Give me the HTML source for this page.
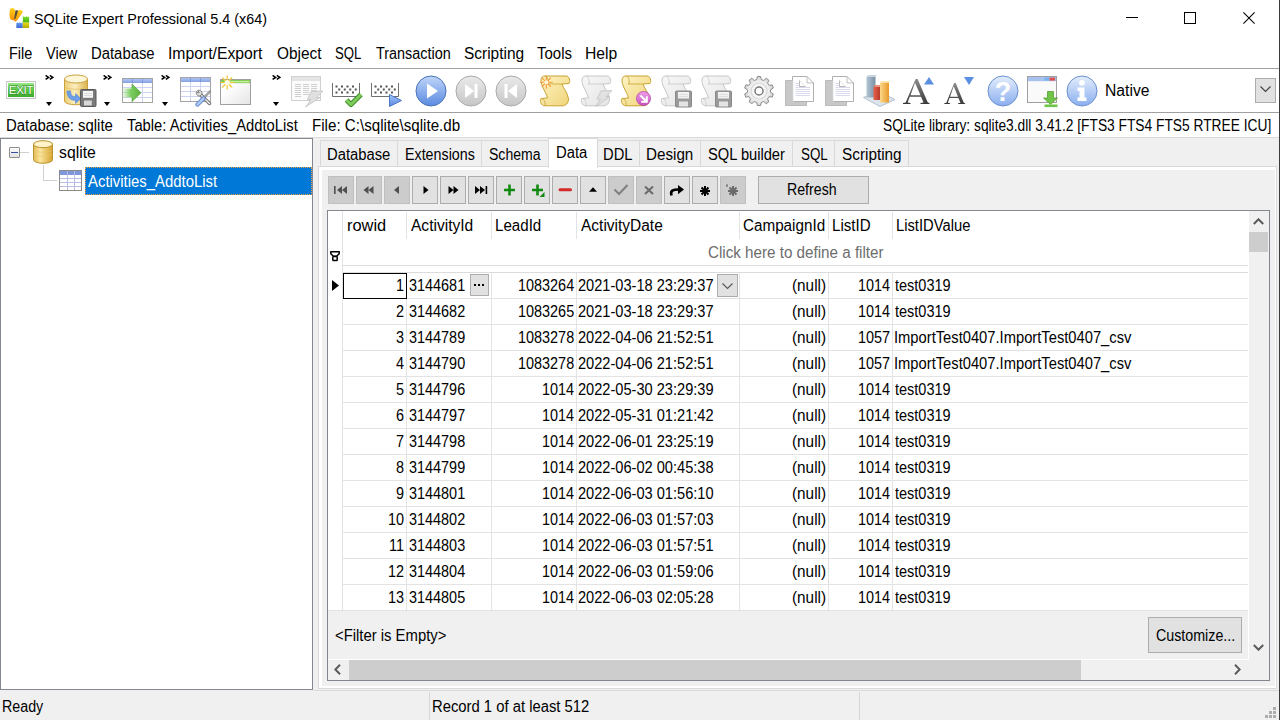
<!DOCTYPE html>
<html><head><meta charset="utf-8"><style>
html,body{margin:0;padding:0}
body{width:1280px;height:720px;position:relative;overflow:hidden;background:#f0f0f0;font-family:"Liberation Sans", sans-serif;font-size:15px;color:#000}
</style></head><body>
<div style="position:absolute;left:0px;top:0px;width:1280px;height:137px;background:#fff"></div>
<div style="position:absolute;left:0px;top:68px;width:1279px;height:1px;background:#a0a0a0"></div>
<div style="position:absolute;left:0px;top:112px;width:1279px;height:1px;background:#a0a0a0"></div>
<div style="position:absolute;left:0px;top:137px;width:1279px;height:1px;background:#dadada"></div>
<svg style="position:absolute;left:6px;top:5px" width="26" height="26" viewBox="0 0 26 26">
<defs><linearGradient id="tb1" x1="0" y1="0" x2="0" y2="1"><stop offset="0" stop-color="#ffd21a"/><stop offset="1" stop-color="#f39000"/></linearGradient>
<linearGradient id="tb2" x1="0" y1="0" x2="0" y2="1"><stop offset="0" stop-color="#7fe02a"/><stop offset="1" stop-color="#48b010"/></linearGradient>
<linearGradient id="tb3" x1="0" y1="0" x2="0" y2="1"><stop offset="0" stop-color="#eee020"/><stop offset="1" stop-color="#b8a800"/></linearGradient>
<linearGradient id="tb4" x1="0" y1="0" x2="0" y2="1"><stop offset="0" stop-color="#6a9cf0"/><stop offset="1" stop-color="#3a6ad8"/></linearGradient></defs>
<path d="M4.5,3.5 C6.5,2.2 8.8,3 9,5.5 L8.6,14.5 C7.8,15.8 5.8,15.5 4.6,14.3 C3,12 3.2,6 4.5,3.5 Z" fill="url(#tb1)"/>
<path d="M13,5.2 C15,4.6 17.2,5.8 16.6,7.6 L10.5,16 C9.5,16.8 8,16.5 8,15.2 L11,7.2 C11.5,6 12,5.5 13,5.2 Z" fill="url(#tb1)"/>
<path d="M9.5,5.2 L12.2,5.6 L9.6,13.6 L8,14.2 Z" fill="#5a4a30"/>
<path d="M10.3,18.2 L11.5,17.2 L12.3,18.2 L13.7,17.2 L15,18.2 L16.8,17.2 V23 H10.3 Z" fill="url(#tb4)"/>
<path d="M16.8,11.8 L17.8,11.2 L18.8,12.2 L20.8,11.2 L21.8,12.2 L23.1,11.2 V17.7 H16.8 Z" fill="url(#tb2)"/>
<path d="M16.8,17.7 L18,17 L19.2,17.9 L20.6,17 L22,17.9 L23.1,17.2 V23 H16.8 Z" fill="url(#tb3)"/>
</svg>
<div style="position:absolute;left:33.87px;top:11.24px;line-height:15px;font-size:15px;color:#000;white-space:nowrap;transform-origin:0 0;transform:scaleX(0.9569)">SQLite Expert Professional 5.4 (x64)</div>
<div style="position:absolute;left:1126px;top:17px;width:12px;height:1px;background:#000"></div>
<div style="position:absolute;left:1184px;top:12px;width:12px;height:12px;border:1px solid #000;box-sizing:border-box"></div>
<svg style="position:absolute;left:1243px;top:12px" width="12" height="12" viewBox="0 0 12 12"><path d="M0.4,0.4 L11.6,11.6 M11.6,0.4 L0.4,11.6" stroke="#000" stroke-width="1.05"/></svg>
<div style="position:absolute;left:1279px;top:0px;width:1px;height:720px;background:#3c3c3c"></div>
<div style="position:absolute;left:8.63px;top:46.46px;line-height:16px;font-size:16px;color:#000;white-space:nowrap;transform-origin:0 0;transform:scaleX(0.9019)">File</div>
<div style="position:absolute;left:46.25px;top:46.46px;line-height:16px;font-size:16px;color:#000;white-space:nowrap;transform-origin:0 0;transform:scaleX(0.9075)">View</div>
<div style="position:absolute;left:91.29px;top:46.46px;line-height:16px;font-size:16px;color:#000;white-space:nowrap;transform-origin:0 0;transform:scaleX(0.9287)">Database</div>
<div style="position:absolute;left:168.12px;top:46.46px;line-height:16px;font-size:16px;color:#000;white-space:nowrap;transform-origin:0 0;transform:scaleX(0.9832)">Import/Export</div>
<div style="position:absolute;left:276.53px;top:46.46px;line-height:16px;font-size:16px;color:#000;white-space:nowrap;transform-origin:0 0;transform:scaleX(0.9605)">Object</div>
<div style="position:absolute;left:335.13px;top:46.46px;line-height:16px;font-size:16px;color:#000;white-space:nowrap;transform-origin:0 0;transform:scaleX(0.8210)">SQL</div>
<div style="position:absolute;left:375.53px;top:46.46px;line-height:16px;font-size:16px;color:#000;white-space:nowrap;transform-origin:0 0;transform:scaleX(0.9008)">Transaction</div>
<div style="position:absolute;left:463.62px;top:46.46px;line-height:16px;font-size:16px;color:#000;white-space:nowrap;transform-origin:0 0;transform:scaleX(0.9661)">Scripting</div>
<div style="position:absolute;left:537.32px;top:46.46px;line-height:16px;font-size:16px;color:#000;white-space:nowrap;transform-origin:0 0;transform:scaleX(0.9357)">Tools</div>
<div style="position:absolute;left:585.33px;top:46.46px;line-height:16px;font-size:16px;color:#000;white-space:nowrap;transform-origin:0 0;transform:scaleX(0.9804)">Help</div>
<svg style="position:absolute;left:6px;top:81px" width="30" height="18" viewBox="0 0 30 18"><defs><linearGradient id="ex" x1="0" y1="0" x2="0" y2="1"><stop offset="0" stop-color="#9be88a"/><stop offset="0.45" stop-color="#5ccc48"/><stop offset="1" stop-color="#3eaa30"/></linearGradient></defs>
<rect x="0.5" y="0.5" width="29" height="17" fill="#fafafa" stroke="#c8c8c8"/>
<rect x="2" y="2" width="26" height="14" fill="url(#ex)"/>
<text x="15" y="13.1" font-family="Liberation Sans" font-size="11.6" fill="#fff" stroke="#2f8a22" stroke-width="0.9" paint-order="stroke" text-anchor="middle" letter-spacing="-0.35">EXIT</text></svg>
<svg style="position:absolute;left:45px;top:75px" width="9" height="5" viewBox="0 0 9 5"><path d="M0.6,0.4 L3.6,2.4 L0.6,4.4 M4.8,0.4 L7.8,2.4 L4.8,4.4" fill="none" stroke="#000" stroke-width="1.5"/></svg>
<svg style="position:absolute;left:103px;top:75px" width="9" height="5" viewBox="0 0 9 5"><path d="M0.6,0.4 L3.6,2.4 L0.6,4.4 M4.8,0.4 L7.8,2.4 L4.8,4.4" fill="none" stroke="#000" stroke-width="1.5"/></svg>
<svg style="position:absolute;left:161px;top:75px" width="9" height="5" viewBox="0 0 9 5"><path d="M0.6,0.4 L3.6,2.4 L0.6,4.4 M4.8,0.4 L7.8,2.4 L4.8,4.4" fill="none" stroke="#000" stroke-width="1.5"/></svg>
<svg style="position:absolute;left:272px;top:75px" width="9" height="5" viewBox="0 0 9 5"><path d="M0.6,0.4 L3.6,2.4 L0.6,4.4 M4.8,0.4 L7.8,2.4 L4.8,4.4" fill="none" stroke="#000" stroke-width="1.5"/></svg>
<svg style="position:absolute;left:46px;top:102px" width="7" height="5" viewBox="0 0 7 5"><path d="M0,0 H6 L3,4 Z" fill="#000"/></svg>
<svg style="position:absolute;left:104px;top:102px" width="7" height="5" viewBox="0 0 7 5"><path d="M0,0 H6 L3,4 Z" fill="#000"/></svg>
<svg style="position:absolute;left:162px;top:102px" width="7" height="5" viewBox="0 0 7 5"><path d="M0,0 H6 L3,4 Z" fill="#000"/></svg>
<svg style="position:absolute;left:273px;top:102px" width="7" height="5" viewBox="0 0 7 5"><path d="M0,0 H6 L3,4 Z" fill="#000"/></svg>
<svg style="position:absolute;left:63px;top:74px" width="34" height="34" viewBox="0 0 34 34"><defs><linearGradient id="cy" x1="0" y1="0" x2="1" y2="0"><stop offset="0" stop-color="#ebcd72"/><stop offset="0.45" stop-color="#fcefc0"/><stop offset="1" stop-color="#dcb04a"/></linearGradient></defs>
<path d="M1.5,5 V27 C1.5,32 24.5,32 24.5,27 V5 Z" fill="url(#cy)" stroke="#caa23e"/>
<ellipse cx="13" cy="5" rx="11.5" ry="4" fill="#fdf6d8" stroke="#caa23e"/>
<path d="M2,13 C5,16 21,16 24,13" fill="none" stroke="#e6c468" stroke-width="0.8"/>
<path d="M4,17 L7.6,17 C7.6,21 9,22.6 12.5,22.6 L12.5,19.6 L17.8,24.6 L12.5,29.6 L12.5,26.4 C7,26.4 4,23 4,17 Z" fill="#6f9ee8" stroke="#4f7fcc" stroke-width="0.6"/>
<rect x="17.5" y="15.5" width="15.5" height="17" rx="1" fill="#7a7a7a" stroke="#5a5a5a"/>
<rect x="20" y="17" width="10" height="6.8" fill="#f6f6f6"/>
<path d="M21,19.5 H29 M21,21.5 H29" stroke="#d0d0d0" stroke-width="0.7"/>
<rect x="21" y="26.5" width="7.8" height="5" fill="#d8d8d8"/></svg>
<svg style="position:absolute;left:122px;top:78px" width="32" height="27" viewBox="0 0 32 27"><defs><linearGradient id="th86a0e2" x1="0" y1="0" x2="0" y2="1"><stop offset="0" stop-color="#b0c4f4"/><stop offset="1" stop-color="#86a0e2"/></linearGradient></defs>
<rect x="0.5" y="0.5" width="30" height="24" fill="#fff" stroke="#a4a4a4"/>
<rect x="1" y="1" width="29" height="4" fill="url(#th86a0e2)"/>
<path d="M10.5,5 V24 M20.5,5 V24 M1,9.5 H30 M1,14.5 H30 M1,19.5 H30" stroke="#cdd3f2" stroke-width="1"/>
<path d="M10.5,1 V5 M20.5,1 V5" stroke="#6c86cc" stroke-width="0.6"/><defs><linearGradient id="ga" x1="0" y1="0" x2="1" y2="0"><stop offset="0" stop-color="#9ad77f" stop-opacity="0.1"/><stop offset="0.45" stop-color="#7ccf60"/><stop offset="1" stop-color="#5cb040"/></linearGradient></defs>
<path d="M0,10.4 H10 V6.1 L19,14.8 L10,23.6 V19.3 H0 Z" fill="url(#ga)"/>
<path d="M10,10.4 V6.1 L19,14.8 L10,23.6 V19.3" fill="none" stroke="#4f9e36" stroke-width="0.7"/></svg>
<svg style="position:absolute;left:180px;top:77px" width="33" height="30" viewBox="0 0 33 30"><defs><linearGradient id="th86a0e2" x1="0" y1="0" x2="0" y2="1"><stop offset="0" stop-color="#b0c4f4"/><stop offset="1" stop-color="#86a0e2"/></linearGradient></defs>
<rect x="0.5" y="0.5" width="30" height="24" fill="#fff" stroke="#a4a4a4"/>
<rect x="1" y="1" width="29" height="4" fill="url(#th86a0e2)"/>
<path d="M10.5,5 V24 M20.5,5 V24 M1,9.5 H30 M1,14.5 H30 M1,19.5 H30" stroke="#cdd3f2" stroke-width="1"/>
<path d="M10.5,1 V5 M20.5,1 V5" stroke="#6c86cc" stroke-width="0.6"/>
<path d="M19.5,16.5 L29.5,26.5" stroke="#707070" stroke-width="3.4" stroke-linecap="round"/>
<path d="M19.5,16.5 L29.5,26.5" stroke="#e8e8e8" stroke-width="1.6" stroke-linecap="round"/>
<path d="M16.5,14.5 C15.5,17 17.5,19.5 20,19 L22,17 C22.5,14.5 20,12.5 17.5,13.5 L19.2,15.2 L18.2,16.2 Z" fill="#e0e0e0" stroke="#707070" stroke-width="0.9"/>
<path d="M23,21.5 L30,14.5" stroke="#707070" stroke-width="2.2" stroke-linecap="round"/>
<path d="M23,21.5 L30,14.5" stroke="#e8e8e8" stroke-width="0.9" stroke-linecap="round"/>
<path d="M17.5,27.5 L23.5,21.5" stroke="#5a7cc0" stroke-width="4.2" stroke-linecap="round"/>
<path d="M17.5,27.5 L23.5,21.5" stroke="#a8c8f8" stroke-width="2.6" stroke-linecap="round"/></svg>
<svg style="position:absolute;left:219px;top:74px" width="33" height="32" viewBox="0 0 33 32"><defs><linearGradient id="nw" x1="0" y1="0" x2="1" y2="1"><stop offset="0.3" stop-color="#fff"/><stop offset="1" stop-color="#e4e4e4"/></linearGradient></defs>
<rect x="1.5" y="5.5" width="30" height="25" fill="url(#nw)" stroke="#a0a0a0"/>
<rect x="2" y="6" width="29" height="3.2" fill="#86cc58"/>
<rect x="9" y="7" width="21" height="1.3" fill="#c8f0a0"/>
<g stroke="#f5c838" stroke-width="1.2"><path d="M8.2,1.5 V15.5 M1.2,8.5 H15.2 M3.2,3.5 L13.2,13.5 M13.2,3.5 L3.2,13.5"/></g>
<circle cx="8.2" cy="8.5" r="2.6" fill="#fffbe8"/></svg>
<svg style="position:absolute;left:290px;top:75px" width="34" height="33" viewBox="0 0 34 33"><rect x="1.5" y="1.5" width="29" height="24" fill="#fbfbfb" stroke="#d0d0d0"/>
<rect x="2" y="2" width="28" height="4" fill="#e4e4e4"/>
<g stroke="#c4c4c4" stroke-width="0.8"><path d="M5,9.5 H11 M13,9.5 H19 M21,9.5 H27 M5,11.5 H11 M13,11.5 H19 M21,11.5 H27 M5,13.5 H11 M13,13.5 H19 M21,13.5 H27 M5,15.5 H11 M13,15.5 H19 M21,15.5 H27 M5,17.5 H11 M13,17.5 H19 M5,19.5 H11 M13,19.5 H19 M5,21.5 H11"/></g>
<path d="M21,16.5 L33,16 L26.5,22.5 L30,22.5 L15.5,32 L21,24.5 L17.5,24.5 Z" fill="#e0e0e0" stroke="#c2c2c2" stroke-width="0.8"/></svg>
<svg style="position:absolute;left:332px;top:75px" width="32" height="33" viewBox="0 0 32 33"><path d="M0.5,8 V21.5 H27.5 V8" fill="none" stroke="#707070" stroke-width="1"/><rect x="3.50" y="10.5" width="2" height="2" fill="#555"/><rect x="9.00" y="10.5" width="2" height="2" fill="#555"/><rect x="14.50" y="10.5" width="2" height="2" fill="#555"/><rect x="20.00" y="10.5" width="2" height="2" fill="#555"/><rect x="6.25" y="13.5" width="2" height="2" fill="#555"/><rect x="11.75" y="13.5" width="2" height="2" fill="#555"/><rect x="17.25" y="13.5" width="2" height="2" fill="#555"/><rect x="22.75" y="13.5" width="2" height="2" fill="#555"/><rect x="3.50" y="16.5" width="2" height="2" fill="#555"/><rect x="9.00" y="16.5" width="2" height="2" fill="#555"/><rect x="14.50" y="16.5" width="2" height="2" fill="#555"/><rect x="20.00" y="16.5" width="2" height="2" fill="#555"/><path d="M14.5,25 L19,29.5 L29,19.5" fill="none" stroke="#3f8f2a" stroke-width="5" stroke-linejoin="round"/>
<path d="M14.5,25 L19,29.5 L29,19.5" fill="none" stroke="#80cc5c" stroke-width="3" stroke-linejoin="round"/></svg>
<svg style="position:absolute;left:371px;top:75px" width="32" height="33" viewBox="0 0 32 33"><path d="M0.5,8 V21.5 H27.5 V8" fill="none" stroke="#707070" stroke-width="1"/><rect x="3.50" y="10.5" width="2" height="2" fill="#555"/><rect x="9.00" y="10.5" width="2" height="2" fill="#555"/><rect x="14.50" y="10.5" width="2" height="2" fill="#555"/><rect x="20.00" y="10.5" width="2" height="2" fill="#555"/><rect x="6.25" y="13.5" width="2" height="2" fill="#555"/><rect x="11.75" y="13.5" width="2" height="2" fill="#555"/><rect x="17.25" y="13.5" width="2" height="2" fill="#555"/><rect x="22.75" y="13.5" width="2" height="2" fill="#555"/><rect x="3.50" y="16.5" width="2" height="2" fill="#555"/><rect x="9.00" y="16.5" width="2" height="2" fill="#555"/><rect x="14.50" y="16.5" width="2" height="2" fill="#555"/><rect x="20.00" y="16.5" width="2" height="2" fill="#555"/><defs><linearGradient id="pl" x1="0" y1="0" x2="0" y2="1"><stop offset="0" stop-color="#a4c4f8"/><stop offset="1" stop-color="#5a88e0"/></linearGradient></defs><path d="M18.5,19.5 L30.5,25.5 L18.5,31.5 Z" fill="url(#pl)" stroke="#4a78c8" stroke-linejoin="round"/></svg>
<svg style="position:absolute;left:415px;top:75px" width="32" height="32" viewBox="0 0 32 32"><defs><linearGradient id="cb1" x1="0" y1="0" x2="0" y2="1"><stop offset="0" stop-color="#c0d6fa"/><stop offset="1" stop-color="#5a8ae0"/></linearGradient></defs>
<circle cx="16" cy="16" r="15" fill="url(#cb1)" stroke="#4a72b8" stroke-width="1"/><path d="M12,8.5 L23,16 L12,23.5 Z" fill="#fff"/></svg>
<svg style="position:absolute;left:455px;top:75px" width="32" height="32" viewBox="0 0 32 32"><defs><linearGradient id="cb2" x1="0" y1="0" x2="0" y2="1"><stop offset="0" stop-color="#eaeaea"/><stop offset="1" stop-color="#c6c6c6"/></linearGradient></defs>
<circle cx="16" cy="16" r="15" fill="url(#cb2)" stroke="#a8a8a8" stroke-width="1"/><path d="M10,9 L19,16 L10,23 Z M19.5,9 H22.5 V23 H19.5 Z" fill="#fff"/></svg>
<svg style="position:absolute;left:495px;top:75px" width="32" height="32" viewBox="0 0 32 32"><defs><linearGradient id="cb3" x1="0" y1="0" x2="0" y2="1"><stop offset="0" stop-color="#eaeaea"/><stop offset="1" stop-color="#c6c6c6"/></linearGradient></defs>
<circle cx="16" cy="16" r="15" fill="url(#cb3)" stroke="#a8a8a8" stroke-width="1"/><path d="M22,9 L13,16 L22,23 Z M9.5,9 H12.5 V23 H9.5 Z" fill="#fff"/></svg>
<svg style="position:absolute;left:539px;top:75px" width="32" height="32" viewBox="0 0 32 32"><defs><linearGradient id="sc1" x1="0" y1="0" x2="1" y2="1"><stop offset="0" stop-color="#fdf3c4"/><stop offset="1" stop-color="#f0d478"/></linearGradient></defs>
<path d="M6,1 H27 C30.5,1 31.5,6.5 30,8.5 L23,9 C24,13 29,18 29.5,24 C29.5,28 27,30.8 23,30.8 H6 C1.5,30.8 0.5,25 2,23.5 L8.5,23 C7,17 2,11 2,5.5 C2,2.5 3.5,1 6,1 Z" fill="url(#sc1)" stroke="#c8a230" stroke-width="1"/>
<path d="M6,1 C9,1 10.5,8.5 8,9 H23" fill="none" stroke="#c8a230" stroke-width="0.8"/>
<path d="M2,23.5 C4.5,23.5 6.5,26 6,30.8" fill="none" stroke="#c8a230" stroke-width="0.8"/><g stroke="#f29a3a" stroke-width="1.1"><path d="M7.3,0.8 V13.8 M0.8,7.3 H13.8 M2.7,2.7 L11.9,11.9 M11.9,2.7 L2.7,11.9"/></g><circle cx="7.3" cy="7.3" r="2" fill="#fff6dc"/></svg>
<svg style="position:absolute;left:580px;top:75px" width="32" height="32" viewBox="0 0 32 32"><defs><linearGradient id="sc2" x1="0" y1="0" x2="1" y2="1"><stop offset="0" stop-color="#f8f8f8"/><stop offset="1" stop-color="#e4e4e4"/></linearGradient></defs>
<path d="M6,1 H27 C30.5,1 31.5,6.5 30,8.5 L23,9 C24,13 29,18 29.5,24 C29.5,28 27,30.8 23,30.8 H6 C1.5,30.8 0.5,25 2,23.5 L8.5,23 C7,17 2,11 2,5.5 C2,2.5 3.5,1 6,1 Z" fill="url(#sc2)" stroke="#c6c6c6" stroke-width="1"/>
<path d="M6,1 C9,1 10.5,8.5 8,9 H23" fill="none" stroke="#c6c6c6" stroke-width="0.8"/>
<path d="M2,23.5 C4.5,23.5 6.5,26 6,30.8" fill="none" stroke="#c6c6c6" stroke-width="0.8"/><path d="M21,16 L32,15.5 L26,21.5 L29.5,21.5 L16,31.5 L20.5,24 L17,24 Z" fill="#e2e2e2" stroke="#c0c0c0" stroke-width="0.8"/></svg>
<svg style="position:absolute;left:620px;top:75px" width="32" height="32" viewBox="0 0 32 32"><defs><linearGradient id="sc3" x1="0" y1="0" x2="1" y2="1"><stop offset="0" stop-color="#fdf3c4"/><stop offset="1" stop-color="#f0d478"/></linearGradient></defs>
<path d="M6,1 H27 C30.5,1 31.5,6.5 30,8.5 L23,9 C24,13 29,18 29.5,24 C29.5,28 27,30.8 23,30.8 H6 C1.5,30.8 0.5,25 2,23.5 L8.5,23 C7,17 2,11 2,5.5 C2,2.5 3.5,1 6,1 Z" fill="url(#sc3)" stroke="#c8a230" stroke-width="1"/>
<path d="M6,1 C9,1 10.5,8.5 8,9 H23" fill="none" stroke="#c8a230" stroke-width="0.8"/>
<path d="M2,23.5 C4.5,23.5 6.5,26 6,30.8" fill="none" stroke="#c8a230" stroke-width="0.8"/><defs><linearGradient id="pk" x1="0" y1="0" x2="0" y2="1"><stop offset="0" stop-color="#f0a0ec"/><stop offset="1" stop-color="#c850c0"/></linearGradient></defs><circle cx="23.5" cy="23.5" r="7" fill="url(#pk)" stroke="#b048a8" stroke-width="0.8"/><path d="M20.5,20.5 L26,26 M26.8,21.2 V26.8 H21.2" stroke="#fff" stroke-width="2" fill="none"/></svg>
<svg style="position:absolute;left:660px;top:75px" width="33" height="33" viewBox="0 0 33 33"><defs><linearGradient id="sc4" x1="0" y1="0" x2="1" y2="1"><stop offset="0" stop-color="#f8f8f8"/><stop offset="1" stop-color="#e4e4e4"/></linearGradient></defs>
<path d="M6,1 H27 C30.5,1 31.5,6.5 30,8.5 L23,9 C24,13 29,18 29.5,24 C29.5,28 27,30.8 23,30.8 H6 C1.5,30.8 0.5,25 2,23.5 L8.5,23 C7,17 2,11 2,5.5 C2,2.5 3.5,1 6,1 Z" fill="url(#sc4)" stroke="#c6c6c6" stroke-width="1"/>
<path d="M6,1 C9,1 10.5,8.5 8,9 H23" fill="none" stroke="#c6c6c6" stroke-width="0.8"/>
<path d="M2,23.5 C4.5,23.5 6.5,26 6,30.8" fill="none" stroke="#c6c6c6" stroke-width="0.8"/><rect x="15.5" y="16" width="16" height="16" rx="1" fill="#9a9a9a" stroke="#8a8a8a"/><rect x="18" y="17" width="11" height="6.5" fill="#f2f2f2"/><path d="M19,19.5 H28 M19,21.5 H28" stroke="#d0d0d0" stroke-width="0.6"/><rect x="19" y="26.5" width="9" height="5" fill="#e4e4e4"/></svg>
<svg style="position:absolute;left:700px;top:75px" width="33" height="33" viewBox="0 0 33 33"><defs><linearGradient id="sc5" x1="0" y1="0" x2="1" y2="1"><stop offset="0" stop-color="#f8f8f8"/><stop offset="1" stop-color="#e4e4e4"/></linearGradient></defs>
<path d="M6,1 H27 C30.5,1 31.5,6.5 30,8.5 L23,9 C24,13 29,18 29.5,24 C29.5,28 27,30.8 23,30.8 H6 C1.5,30.8 0.5,25 2,23.5 L8.5,23 C7,17 2,11 2,5.5 C2,2.5 3.5,1 6,1 Z" fill="url(#sc5)" stroke="#c6c6c6" stroke-width="1"/>
<path d="M6,1 C9,1 10.5,8.5 8,9 H23" fill="none" stroke="#c6c6c6" stroke-width="0.8"/>
<path d="M2,23.5 C4.5,23.5 6.5,26 6,30.8" fill="none" stroke="#c6c6c6" stroke-width="0.8"/><rect x="15.5" y="16" width="16" height="16" rx="1" fill="#9a9a9a" stroke="#8a8a8a"/><rect x="18" y="17" width="11" height="6.5" fill="#f2f2f2"/><path d="M19,19.5 H28 M19,21.5 H28" stroke="#d0d0d0" stroke-width="0.6"/><rect x="19" y="26.5" width="9" height="5" fill="#e4e4e4"/></svg>
<svg style="position:absolute;left:743px;top:75px" width="32" height="32" viewBox="0 0 32 32"><defs><radialGradient id="gr" cx="0.5" cy="0.5" r="0.5"><stop offset="0.2" stop-color="#fdfdfd"/><stop offset="0.7" stop-color="#ececec"/><stop offset="1" stop-color="#d4d4d4"/></radialGradient></defs>
<path d="M13.68,4.63 L14.35,1.49 L17.65,1.49 L18.32,4.63 L20.81,5.44 L23.19,3.30 L25.86,5.23 L24.56,8.17 L26.09,10.28 L29.29,9.95 L30.31,13.08 L27.53,14.69 L27.53,17.31 L30.31,18.92 L29.29,22.05 L26.09,21.72 L24.56,23.83 L25.86,26.77 L23.19,28.70 L20.81,26.56 L18.32,27.37 L17.65,30.51 L14.35,30.51 L13.68,27.37 L11.19,26.56 L8.81,28.70 L6.14,26.77 L7.44,23.83 L5.91,21.72 L2.71,22.05 L1.69,18.92 L4.47,17.31 L4.47,14.69 L1.69,13.08 L2.71,9.95 L5.91,10.28 L7.44,8.17 L6.14,5.23 L8.81,3.30 L11.19,5.44 Z" fill="url(#gr)" stroke="#8c8c8c" stroke-width="1" stroke-linejoin="round"/>
<circle cx="16" cy="16" r="8" fill="none" stroke="#d8d8d8" stroke-width="1.2"/>
<circle cx="16" cy="16" r="4" fill="#fff" stroke="#7a7a7a" stroke-width="1.5"/></svg>
<svg style="position:absolute;left:785px;top:75px" width="29" height="32" viewBox="0 0 29 32"><path d="M0.5,5.5 H15 L21.5,12 V30.5 H0.5 Z" fill="#c8c8c8" stroke="#bcbcbc"/>
<path d="M7.5,1.5 H22 L28.5,8 V26.5 H7.5 Z" fill="#fff" stroke="#b0b0b0"/>
<path d="M22,1.5 V8 H28.5" fill="none" stroke="#b0b0b0" stroke-width="0.8"/>
<rect x="7.5" y="5.5" width="1" height="21" fill="#e8e8e8"/>
<path d="M14.5,5.5 V11.5 H20.5" fill="none" stroke="#a8a8a8" stroke-width="0.8"/>
<path d="M14.5,5.5 L20.5,11.5" fill="none" stroke="#d0d0d0" stroke-width="0.6"/>
<g stroke="#c0c0e0" stroke-width="0.6"><path d="M10.5,8.5 H14 M10.5,10.5 H14 M10.5,12.5 H25 M10.5,14.5 H25 M10.5,16.5 H25 M10.5,18.5 H25 M10.5,20.5 H25"/></g></svg>
<svg style="position:absolute;left:825px;top:75px" width="29" height="32" viewBox="0 0 29 32"><path d="M0.5,5.5 H15 L21.5,12 V30.5 H0.5 Z" fill="#c8c8c8" stroke="#bcbcbc"/>
<path d="M7.5,1.5 H22 L28.5,8 V26.5 H7.5 Z" fill="#fff" stroke="#b0b0b0"/>
<path d="M22,1.5 V8 H28.5" fill="none" stroke="#b0b0b0" stroke-width="0.8"/>
<rect x="7.5" y="5.5" width="1" height="21" fill="#e8e8e8"/>
<path d="M14.5,5.5 V11.5 H20.5" fill="none" stroke="#a8a8a8" stroke-width="0.8"/>
<path d="M14.5,5.5 L20.5,11.5" fill="none" stroke="#d0d0d0" stroke-width="0.6"/>
<g stroke="#c0c0e0" stroke-width="0.6"><path d="M10.5,8.5 H14 M10.5,10.5 H14 M10.5,12.5 H25 M10.5,14.5 H25 M10.5,16.5 H25 M10.5,18.5 H25 M10.5,20.5 H25"/></g></svg>
<svg style="position:absolute;left:862px;top:74px" width="34" height="34" viewBox="0 0 34 34"><defs><linearGradient id="b1" x1="0" y1="0" x2="1" y2="0"><stop offset="0" stop-color="#b4c6d6"/><stop offset="1" stop-color="#7890a4"/></linearGradient>
<linearGradient id="b2" x1="0" y1="0" x2="1" y2="0"><stop offset="0" stop-color="#e8604c"/><stop offset="1" stop-color="#b83a2a"/></linearGradient>
<linearGradient id="b3" x1="0" y1="0" x2="1" y2="0"><stop offset="0" stop-color="#fcd88a"/><stop offset="1" stop-color="#e89a2a"/></linearGradient></defs>
<path d="M1.5,23.5 L18,32.5 L33,25.5 L16.5,17.5 Z" fill="#dce4ec" stroke="#b4c0cc" stroke-linejoin="round"/>
<rect x="4.5" y="2.5" width="9" height="21" fill="url(#b1)"/>
<path d="M4.5,2.5 L6,1 H15 L13.5,2.5 Z" fill="#c8d6e2"/>
<rect x="11.5" y="12.5" width="6.5" height="13.5" fill="url(#b2)"/>
<path d="M11.5,12.5 L13,11 H19.5 L18,12.5 Z" fill="#f08878"/>
<rect x="18" y="8.5" width="9" height="20" fill="url(#b3)"/>
<path d="M18,8.5 L19.5,7 H28.5 L27,8.5 Z" fill="#fde4a8"/></svg>
<svg style="position:absolute;left:900px;top:74px" width="36" height="32" viewBox="0 0 36 32"><defs><linearGradient id="ag" x1="0" y1="0" x2="0" y2="1"><stop offset="0" stop-color="#8c8c8c"/><stop offset="1" stop-color="#383838"/></linearGradient></defs>
<path transform="translate(3,5)" d="M0,25 H7.5 V24 L4.6,23.5 L6.8,17.8 H18 L20.6,23.5 L17.5,24 V25 H26.5 V24 L24.8,23.5 L14.6,0 H12.6 L2.7,23.5 L0,24 Z M7.5,16.2 H17.5 L12,3.8 Z" fill="url(#ag)" fill-rule="evenodd"/>
<path d="M24,10.5 L29,3 L34,10.5 Z" fill="#5b8fe0"/></svg>
<svg style="position:absolute;left:941px;top:74px" width="36" height="32" viewBox="0 0 36 32"><defs><linearGradient id="ag2" x1="0" y1="0" x2="0" y2="1"><stop offset="0" stop-color="#8c8c8c"/><stop offset="1" stop-color="#383838"/></linearGradient></defs>
<path transform="translate(3.2,9.1) scale(0.79,0.84)" d="M0,25 H7.5 V24 L4.6,23.5 L6.8,17.8 H18 L20.6,23.5 L17.5,24 V25 H26.5 V24 L24.8,23.5 L14.6,0 H12.6 L2.7,23.5 L0,24 Z M7.5,16.2 H17.5 L12,3.8 Z" fill="url(#ag2)" fill-rule="evenodd"/>
<path d="M23,3 H33 L28,11 Z" fill="#5b8fe0"/></svg>
<svg style="position:absolute;left:987px;top:75px" width="32" height="32" viewBox="0 0 32 32"><defs><linearGradient id="cb4" x1="0" y1="0" x2="0" y2="1"><stop offset="0" stop-color="#e4eefc"/><stop offset="1" stop-color="#8aaeee"/></linearGradient></defs>
<circle cx="16" cy="16" r="15" fill="url(#cb4)" stroke="#6c90d0" stroke-width="1"/><text x="16" y="26" font-family="Liberation Sans" font-weight="bold" font-size="27" fill="#fff" text-anchor="middle">?</text></svg>
<svg style="position:absolute;left:1026px;top:75px" width="34" height="33" viewBox="0 0 34 33"><rect x="1.5" y="1.5" width="29" height="26" fill="#fafafa" stroke="#a0a0a0"/>
<rect x="2" y="2" width="28" height="4.2" fill="#a8c2f0"/>
<rect x="18.5" y="2.6" width="4.5" height="3" fill="#78b4f0"/><rect x="23.5" y="2.6" width="5.5" height="3" fill="#e05050"/>
<path d="M21.5,16.5 H27.5 V23 H31.5 L24.5,29.5 L17.5,23 H21.5 Z" fill="#70c448" stroke="#4a9a28" stroke-width="0.7"/>
<rect x="18.5" y="29.5" width="13" height="2.6" fill="#70c448"/></svg>
<svg style="position:absolute;left:1066px;top:75px" width="32" height="32" viewBox="0 0 32 32"><defs><linearGradient id="cb5" x1="0" y1="0" x2="0" y2="1"><stop offset="0" stop-color="#e4eefc"/><stop offset="1" stop-color="#8aaeee"/></linearGradient></defs>
<circle cx="16" cy="16" r="15" fill="url(#cb5)" stroke="#6c90d0" stroke-width="1"/><circle cx="16" cy="7.8" r="2.9" fill="#fff"/><path d="M11.5,12.5 H18.5 V22.5 H20.5 V26 H11.5 V22.5 H13.5 V16 H11.5 Z" fill="#fff"/></svg>
<div style="position:absolute;left:1104.73px;top:83.46px;line-height:16px;font-size:16px;color:#000;white-space:nowrap;transform-origin:0 0;transform:scaleX(0.9803)">Native</div>
<div style="position:absolute;left:1255px;top:78px;width:21px;height:25px;background:#e1e1e1;border:1px solid #adadad;box-sizing:border-box"></div>
<svg style="position:absolute;left:1260px;top:86px" width="11" height="7" viewBox="0 0 11 7"><path d="M0.5,0.5 L5.5,5.5 L10.5,0.5" fill="none" stroke="#444" stroke-width="1.2"/></svg>
<div style="position:absolute;left:6.29px;top:118.46px;line-height:16px;font-size:16px;color:#000;white-space:nowrap;transform-origin:0 0;transform:scaleX(0.9314)">Database: sqlite</div>
<div style="position:absolute;left:127.22px;top:118.46px;line-height:16px;font-size:16px;color:#000;white-space:nowrap;transform-origin:0 0;transform:scaleX(0.9233)">Table: Activities_AddtoList</div>
<div style="position:absolute;left:311.77px;top:118.46px;line-height:16px;font-size:16px;color:#000;white-space:nowrap;transform-origin:0 0;transform:scaleX(0.9463)">File: C:\sqlite\sqlite.db</div>
<div style="position:absolute;left:882.90px;top:118.46px;line-height:16px;font-size:16px;color:#000;white-space:nowrap;transform-origin:0 0;transform:scaleX(0.8600)">SQLite library: sqlite3.dll 3.41.2 [FTS3 FTS4 FTS5 RTREE ICU]</div>
<div style="position:absolute;left:0px;top:138px;width:313px;height:552px;background:#fff;border:1px solid #828790;box-sizing:border-box"></div>
<div style="position:absolute;left:9px;top:147px;width:11px;height:11px;background:linear-gradient(#fdfdfd,#e0e0e0);border:1px solid #8f8f8f;box-sizing:border-box;border-radius:1px"></div>
<div style="position:absolute;left:11px;top:152px;width:7px;height:1px;background:#3a4ea0"></div>
<div style="position:absolute;left:20px;top:152px;width:9px;height:1px;background:#d0d0d0"></div>
<div style="position:absolute;left:43px;top:165px;width:1px;height:16px;background:#d0d0d0"></div>
<div style="position:absolute;left:43px;top:180px;width:14px;height:1px;background:#d0d0d0"></div>
<svg style="position:absolute;left:32px;top:140px" width="22" height="25" viewBox="0 0 22 25"><defs><linearGradient id="tcy" x1="0" y1="0" x2="1" y2="0"><stop offset="0" stop-color="#e2b94e"/><stop offset="0.35" stop-color="#fbe6a0"/><stop offset="1" stop-color="#d6a32c"/></linearGradient></defs>
<path d="M1.5,4 V19.5 C1.5,24.5 20.5,24.5 20.5,19.5 V4 Z" fill="url(#tcy)" stroke="#b8922c"/>
<ellipse cx="11" cy="4.2" rx="9.5" ry="3.5" fill="#fdf2c8" stroke="#b8922c"/>
<path d="M2,10 C4,13 18,13 20,10 M2,14 C4,17 18,17 20,14" fill="none" stroke="#e8c870" stroke-width="0.7"/></svg>
<div style="position:absolute;left:58.61px;top:145.46px;line-height:16px;font-size:16px;color:#000;white-space:nowrap;transform-origin:0 0;transform:scaleX(0.9847)">sqlite</div>
<svg style="position:absolute;left:59px;top:170px" width="23" height="21" viewBox="0 0 23 21"><rect x="0.5" y="0.5" width="22" height="20" fill="#fff" stroke="#8a8a8a"/>
<rect x="1" y="1" width="21" height="4" fill="#7f98dc"/>
<path d="M8.5,1 V20 M15.5,1 V20 M1,8.5 H22 M1,12.5 H22 M1,16.5 H22" stroke="#b8bee4" stroke-width="1"/></svg>
<div style="position:absolute;left:85px;top:167px;width:227px;height:28px;background:#0078d7"></div>
<div style="position:absolute;left:85px;top:167px;width:227px;height:28px;border:1px dotted #f0a040;box-sizing:border-box"></div>
<div style="position:absolute;left:87.75px;top:174.46px;line-height:16px;font-size:16px;color:#fff;white-space:nowrap;transform-origin:0 0;transform:scaleX(0.9312)">Activities_AddtoList</div>
<div style="position:absolute;left:320px;top:140px;width:78px;height:27px;background:#f0f0f0;border:1px solid #d9d9d9;box-sizing:border-box"></div>
<div style="position:absolute;left:326.80px;top:147.46px;line-height:16px;font-size:16px;color:#000;white-space:nowrap;transform-origin:0 0;transform:scaleX(0.9249)">Database</div>
<div style="position:absolute;left:397px;top:140px;width:85px;height:27px;background:#f0f0f0;border:1px solid #d9d9d9;box-sizing:border-box"></div>
<div style="position:absolute;left:404.54px;top:147.46px;line-height:16px;font-size:16px;color:#000;white-space:nowrap;transform-origin:0 0;transform:scaleX(0.8919)">Extensions</div>
<div style="position:absolute;left:481px;top:140px;width:68px;height:27px;background:#f0f0f0;border:1px solid #d9d9d9;box-sizing:border-box"></div>
<div style="position:absolute;left:488.99px;top:147.46px;line-height:16px;font-size:16px;color:#000;white-space:nowrap;transform-origin:0 0;transform:scaleX(0.8776)">Schema</div>
<div style="position:absolute;left:597px;top:140px;width:43px;height:27px;background:#f0f0f0;border:1px solid #d9d9d9;box-sizing:border-box"></div>
<div style="position:absolute;left:602.70px;top:147.46px;line-height:16px;font-size:16px;color:#000;white-space:nowrap;transform-origin:0 0;transform:scaleX(0.9202)">DDL</div>
<div style="position:absolute;left:639px;top:140px;width:62px;height:27px;background:#f0f0f0;border:1px solid #d9d9d9;box-sizing:border-box"></div>
<div style="position:absolute;left:646.47px;top:147.46px;line-height:16px;font-size:16px;color:#000;white-space:nowrap;transform-origin:0 0;transform:scaleX(0.9493)">Design</div>
<div style="position:absolute;left:700px;top:140px;width:93px;height:27px;background:#f0f0f0;border:1px solid #d9d9d9;box-sizing:border-box"></div>
<div style="position:absolute;left:707.66px;top:147.46px;line-height:16px;font-size:16px;color:#000;white-space:nowrap;transform-origin:0 0;transform:scaleX(0.9167)">SQL builder</div>
<div style="position:absolute;left:792px;top:140px;width:43px;height:27px;background:#f0f0f0;border:1px solid #d9d9d9;box-sizing:border-box"></div>
<div style="position:absolute;left:800.51px;top:147.46px;line-height:16px;font-size:16px;color:#000;white-space:nowrap;transform-origin:0 0;transform:scaleX(0.8372)">SQL</div>
<div style="position:absolute;left:834px;top:140px;width:75px;height:27px;background:#f0f0f0;border:1px solid #d9d9d9;box-sizing:border-box"></div>
<div style="position:absolute;left:841.73px;top:147.46px;line-height:16px;font-size:16px;color:#000;white-space:nowrap;transform-origin:0 0;transform:scaleX(0.9579)">Scripting</div>
<div style="position:absolute;left:318px;top:166px;width:959px;height:523px;background:#fff;border:1px solid #d9d9d9;box-sizing:border-box"></div>
<div style="position:absolute;left:322px;top:170px;width:953px;height:516px;background:#f0f0f0"></div>
<div style="position:absolute;left:548px;top:138px;width:50px;height:30px;background:#fff;border:1px solid #d9d9d9;border-bottom:none;box-sizing:border-box"></div>
<div style="position:absolute;left:556.00px;top:145.46px;line-height:16px;font-size:16px;color:#000;white-space:nowrap;transform-origin:0 0;transform:scaleX(0.9262)">Data</div>
<div style="position:absolute;left:328px;top:176px;width:26px;height:28px;background:#cccccc;border:1px solid #bfbfbf;box-sizing:border-box"></div>
<div style="position:absolute;left:356px;top:176px;width:26px;height:28px;background:#cccccc;border:1px solid #bfbfbf;box-sizing:border-box"></div>
<div style="position:absolute;left:384px;top:176px;width:26px;height:28px;background:#cccccc;border:1px solid #bfbfbf;box-sizing:border-box"></div>
<div style="position:absolute;left:412px;top:176px;width:26px;height:28px;background:#e1e1e1;border:1px solid #adadad;box-sizing:border-box"></div>
<div style="position:absolute;left:440px;top:176px;width:26px;height:28px;background:#e1e1e1;border:1px solid #adadad;box-sizing:border-box"></div>
<div style="position:absolute;left:468px;top:176px;width:26px;height:28px;background:#e1e1e1;border:1px solid #adadad;box-sizing:border-box"></div>
<div style="position:absolute;left:496px;top:176px;width:26px;height:28px;background:#e1e1e1;border:1px solid #adadad;box-sizing:border-box"></div>
<div style="position:absolute;left:524px;top:176px;width:26px;height:28px;background:#e1e1e1;border:1px solid #adadad;box-sizing:border-box"></div>
<div style="position:absolute;left:552px;top:176px;width:26px;height:28px;background:#e1e1e1;border:1px solid #adadad;box-sizing:border-box"></div>
<div style="position:absolute;left:580px;top:176px;width:26px;height:28px;background:#e1e1e1;border:1px solid #adadad;box-sizing:border-box"></div>
<div style="position:absolute;left:608px;top:176px;width:26px;height:28px;background:#cccccc;border:1px solid #bfbfbf;box-sizing:border-box"></div>
<div style="position:absolute;left:636px;top:176px;width:26px;height:28px;background:#cccccc;border:1px solid #bfbfbf;box-sizing:border-box"></div>
<div style="position:absolute;left:664px;top:176px;width:26px;height:28px;background:#e1e1e1;border:1px solid #adadad;box-sizing:border-box"></div>
<div style="position:absolute;left:692px;top:176px;width:26px;height:28px;background:#e1e1e1;border:1px solid #adadad;box-sizing:border-box"></div>
<div style="position:absolute;left:720px;top:176px;width:26px;height:28px;background:#cccccc;border:1px solid #bfbfbf;box-sizing:border-box"></div>
<svg style="position:absolute;left:0;top:0" width="1280" height="720" viewBox="0 0 1280 720"><g fill="#4f4f4f">
<rect x="334" y="186" width="1.6" height="8"/>
<path d="M342,186 L337,190 L342,194 Z M347,186 L342,190 L347,194 Z"/>
<path d="M368.5,186 L363.5,190 L368.5,194 Z M373.5,186 L368.5,190 L373.5,194 Z"/>
<path d="M399,186 L394,190 L399,194 Z"/>
</g>
<g fill="#000">
<path d="M423.5,186 L428.5,190 L423.5,194 Z"/>
<path d="M448.5,186 L453.5,190 L448.5,194 Z M453.5,186 L458.5,190 L453.5,194 Z"/>
<path d="M475,186 L480,190 L475,194 Z M480,186 L485,190 L480,194 Z"/>
<rect x="485.6" y="186" width="1.6" height="8"/>
</g>
<path d="M504,190 H515 M509.5,184.5 V195.5" stroke="#128a12" stroke-width="2.6"/>
<path d="M532,190 H543 M537.5,184.5 V195.5" stroke="#128a12" stroke-width="2.6"/>
<path d="M544.5,192 V197 H539.5 Z" fill="#128a12"/>
<path d="M560,189.8 H570.5" stroke="#d42a2a" stroke-width="3" stroke-linecap="round"/>
<path d="M589,191.8 L593,187.3 L597,191.8 Z" fill="#000"/>
<path d="M614.5,189.5 L619,194 L627.5,185" fill="none" stroke="#808080" stroke-width="2"/>
<path d="M645,186.5 L653,194 M653,186.5 L645,194" stroke="#6a6a6a" stroke-width="2"/>
<path d="M671.5,195.5 C670,190.5 673,189.5 678.5,189.5" fill="none" stroke="#000" stroke-width="2.6"/>
<path d="M678,185 L684,189.6 L678,194.2 Z" fill="#000"/>
<g stroke="#000" stroke-width="2"><path d="M705,186 V196 M700,191 H710 M701.5,187.5 L708.5,194.5 M708.5,187.5 L701.5,194.5"/></g>
<g stroke="#6a6a6a" stroke-width="2"><path d="M733,186 V196 M728,191 H738 M729.5,187.5 L736.5,194.5 M736.5,187.5 L729.5,194.5"/></g>
<rect x="726.3" y="184.3" width="1.4" height="2.6" fill="#6a6a6a"/></svg>
<div style="position:absolute;left:758px;top:176px;width:111px;height:28px;background:#e1e1e1;border:1px solid #adadad;box-sizing:border-box"></div>
<div style="position:absolute;left:787.35px;top:182.46px;line-height:16px;font-size:16px;color:#000;white-space:nowrap;transform-origin:0 0;transform:scaleX(0.8860)">Refresh</div>
<div style="position:absolute;left:327px;top:210px;width:943px;height:471px;background:#fff;border:1px solid #828790;box-sizing:border-box"></div>
<div style="position:absolute;left:342px;top:211px;width:1px;height:400px;background:#e3e3e3"></div>
<div style="position:absolute;left:406px;top:212px;width:1px;height:27px;background:#e3e3e3"></div>
<div style="position:absolute;left:491px;top:212px;width:1px;height:27px;background:#e3e3e3"></div>
<div style="position:absolute;left:576px;top:212px;width:1px;height:27px;background:#e3e3e3"></div>
<div style="position:absolute;left:739px;top:212px;width:1px;height:27px;background:#e3e3e3"></div>
<div style="position:absolute;left:828px;top:212px;width:1px;height:27px;background:#e3e3e3"></div>
<div style="position:absolute;left:892px;top:212px;width:1px;height:27px;background:#e3e3e3"></div>
<div style="position:absolute;left:342px;top:265px;width:906px;height:1px;background:#dcdcdc"></div>
<div style="position:absolute;left:342px;top:272px;width:906px;height:1px;background:#dcdcdc"></div>
<div style="position:absolute;left:346.68px;top:218.46px;line-height:16px;font-size:16px;color:#000;white-space:nowrap;transform-origin:0 0;transform:scaleX(1.0238)">rowid</div>
<div style="position:absolute;left:411.30px;top:218.46px;line-height:16px;font-size:16px;color:#000;white-space:nowrap;transform-origin:0 0;transform:scaleX(0.9712)">ActivityId</div>
<div style="position:absolute;left:494.97px;top:218.46px;line-height:16px;font-size:16px;color:#000;white-space:nowrap;transform-origin:0 0;transform:scaleX(0.9456)">LeadId</div>
<div style="position:absolute;left:580.80px;top:218.46px;line-height:16px;font-size:16px;color:#000;white-space:nowrap;transform-origin:0 0;transform:scaleX(0.9681)">ActivityDate</div>
<div style="position:absolute;left:743.14px;top:218.46px;line-height:16px;font-size:16px;color:#000;white-space:nowrap;transform-origin:0 0;transform:scaleX(0.9518)">CampaignId</div>
<div style="position:absolute;left:831.68px;top:218.46px;line-height:16px;font-size:16px;color:#000;white-space:nowrap;transform-origin:0 0;transform:scaleX(0.9422)">ListID</div>
<div style="position:absolute;left:896.10px;top:218.46px;line-height:16px;font-size:16px;color:#000;white-space:nowrap;transform-origin:0 0;transform:scaleX(0.9220)">ListIDValue</div>
<div style="position:absolute;left:707.54px;top:245.46px;line-height:16px;font-size:16px;color:#6d6d6d;white-space:nowrap;transform-origin:0 0;transform:scaleX(0.9492)">Click here to define a filter</div>
<svg style="position:absolute;left:326px;top:244px" width="20" height="22" viewBox="0 0 20 22"><path d="M4.8,7.8 H13.2 V9.8 L10.5,12.3 H7.5 L4.8,9.8 Z" fill="none" stroke="#000" stroke-width="1.5" stroke-linejoin="round"/><rect x="6.8" y="12.5" width="4.4" height="4" rx="0.8" fill="none" stroke="#000" stroke-width="1.5"/></svg>
<div style="position:absolute;left:343px;top:298px;width:905px;height:1px;background:#e3e3e3"></div>
<div style="position:absolute;left:406px;top:273px;width:1px;height:25px;background:#e3e3e3"></div>
<div style="position:absolute;left:491px;top:273px;width:1px;height:25px;background:#e3e3e3"></div>
<div style="position:absolute;left:576px;top:273px;width:1px;height:25px;background:#e3e3e3"></div>
<div style="position:absolute;left:739px;top:273px;width:1px;height:25px;background:#e3e3e3"></div>
<div style="position:absolute;left:828px;top:273px;width:1px;height:25px;background:#e3e3e3"></div>
<div style="position:absolute;left:892px;top:273px;width:1px;height:25px;background:#e3e3e3"></div>
<div style="position:absolute;left:396.11px;top:278.46px;line-height:16px;font-size:16px;color:#000;white-space:nowrap;transform-origin:0 0;transform:scaleX(0.9018)">1</div>
<div style="position:absolute;left:408.86px;top:278.46px;line-height:16px;font-size:16px;color:#000;white-space:nowrap;transform-origin:0 0;transform:scaleX(0.9018)">3144681</div>
<div style="position:absolute;left:517.59px;top:278.46px;line-height:16px;font-size:16px;color:#000;white-space:nowrap;transform-origin:0 0;transform:scaleX(0.9018)">1083264</div>
<div style="position:absolute;left:577.77px;top:278.46px;line-height:16px;font-size:16px;color:#000;white-space:nowrap;transform-origin:0 0;transform:scaleX(0.9124)">2021-03-18 23:29:37</div>
<div style="position:absolute;left:792.04px;top:278.46px;line-height:16px;font-size:16px;color:#000;white-space:nowrap;transform-origin:0 0;transform:scaleX(0.9575)">(null)</div>
<div style="position:absolute;left:857.86px;top:278.46px;line-height:16px;font-size:16px;color:#000;white-space:nowrap;transform-origin:0 0;transform:scaleX(0.9018)">1014</div>
<div style="position:absolute;left:895.12px;top:278.46px;line-height:16px;font-size:16px;color:#000;white-space:nowrap;transform-origin:0 0;transform:scaleX(0.9060)">test0319</div>
<div style="position:absolute;left:343px;top:324px;width:905px;height:1px;background:#e3e3e3"></div>
<div style="position:absolute;left:406px;top:299px;width:1px;height:25px;background:#e3e3e3"></div>
<div style="position:absolute;left:491px;top:299px;width:1px;height:25px;background:#e3e3e3"></div>
<div style="position:absolute;left:576px;top:299px;width:1px;height:25px;background:#e3e3e3"></div>
<div style="position:absolute;left:739px;top:299px;width:1px;height:25px;background:#e3e3e3"></div>
<div style="position:absolute;left:828px;top:299px;width:1px;height:25px;background:#e3e3e3"></div>
<div style="position:absolute;left:892px;top:299px;width:1px;height:25px;background:#e3e3e3"></div>
<div style="position:absolute;left:396.20px;top:304.46px;line-height:16px;font-size:16px;color:#000;white-space:nowrap;transform-origin:0 0;transform:scaleX(0.9018)">2</div>
<div style="position:absolute;left:408.86px;top:304.46px;line-height:16px;font-size:16px;color:#000;white-space:nowrap;transform-origin:0 0;transform:scaleX(0.9018)">3144682</div>
<div style="position:absolute;left:517.77px;top:304.46px;line-height:16px;font-size:16px;color:#000;white-space:nowrap;transform-origin:0 0;transform:scaleX(0.9018)">1083265</div>
<div style="position:absolute;left:577.77px;top:304.46px;line-height:16px;font-size:16px;color:#000;white-space:nowrap;transform-origin:0 0;transform:scaleX(0.9124)">2021-03-18 23:29:37</div>
<div style="position:absolute;left:792.04px;top:304.46px;line-height:16px;font-size:16px;color:#000;white-space:nowrap;transform-origin:0 0;transform:scaleX(0.9575)">(null)</div>
<div style="position:absolute;left:857.86px;top:304.46px;line-height:16px;font-size:16px;color:#000;white-space:nowrap;transform-origin:0 0;transform:scaleX(0.9018)">1014</div>
<div style="position:absolute;left:895.12px;top:304.46px;line-height:16px;font-size:16px;color:#000;white-space:nowrap;transform-origin:0 0;transform:scaleX(0.9060)">test0319</div>
<div style="position:absolute;left:343px;top:350px;width:905px;height:1px;background:#e3e3e3"></div>
<div style="position:absolute;left:406px;top:325px;width:1px;height:25px;background:#e3e3e3"></div>
<div style="position:absolute;left:491px;top:325px;width:1px;height:25px;background:#e3e3e3"></div>
<div style="position:absolute;left:576px;top:325px;width:1px;height:25px;background:#e3e3e3"></div>
<div style="position:absolute;left:739px;top:325px;width:1px;height:25px;background:#e3e3e3"></div>
<div style="position:absolute;left:828px;top:325px;width:1px;height:25px;background:#e3e3e3"></div>
<div style="position:absolute;left:892px;top:325px;width:1px;height:25px;background:#e3e3e3"></div>
<div style="position:absolute;left:396.11px;top:330.46px;line-height:16px;font-size:16px;color:#000;white-space:nowrap;transform-origin:0 0;transform:scaleX(0.9018)">3</div>
<div style="position:absolute;left:408.86px;top:330.46px;line-height:16px;font-size:16px;color:#000;white-space:nowrap;transform-origin:0 0;transform:scaleX(0.9018)">3144789</div>
<div style="position:absolute;left:517.77px;top:330.46px;line-height:16px;font-size:16px;color:#000;white-space:nowrap;transform-origin:0 0;transform:scaleX(0.9018)">1083278</div>
<div style="position:absolute;left:577.77px;top:330.46px;line-height:16px;font-size:16px;color:#000;white-space:nowrap;transform-origin:0 0;transform:scaleX(0.9124)">2022-04-06 21:52:51</div>
<div style="position:absolute;left:792.04px;top:330.46px;line-height:16px;font-size:16px;color:#000;white-space:nowrap;transform-origin:0 0;transform:scaleX(0.9575)">(null)</div>
<div style="position:absolute;left:858.22px;top:330.46px;line-height:16px;font-size:16px;color:#000;white-space:nowrap;transform-origin:0 0;transform:scaleX(0.9018)">1057</div>
<div style="position:absolute;left:894.01px;top:330.46px;line-height:16px;font-size:16px;color:#000;white-space:nowrap;transform-origin:0 0;transform:scaleX(0.9204)">ImportTest0407.ImportTest0407_csv</div>
<div style="position:absolute;left:343px;top:376px;width:905px;height:1px;background:#e3e3e3"></div>
<div style="position:absolute;left:406px;top:351px;width:1px;height:25px;background:#e3e3e3"></div>
<div style="position:absolute;left:491px;top:351px;width:1px;height:25px;background:#e3e3e3"></div>
<div style="position:absolute;left:576px;top:351px;width:1px;height:25px;background:#e3e3e3"></div>
<div style="position:absolute;left:739px;top:351px;width:1px;height:25px;background:#e3e3e3"></div>
<div style="position:absolute;left:828px;top:351px;width:1px;height:25px;background:#e3e3e3"></div>
<div style="position:absolute;left:892px;top:351px;width:1px;height:25px;background:#e3e3e3"></div>
<div style="position:absolute;left:395.83px;top:356.46px;line-height:16px;font-size:16px;color:#000;white-space:nowrap;transform-origin:0 0;transform:scaleX(0.9018)">4</div>
<div style="position:absolute;left:408.86px;top:356.46px;line-height:16px;font-size:16px;color:#000;white-space:nowrap;transform-origin:0 0;transform:scaleX(0.9018)">3144790</div>
<div style="position:absolute;left:517.77px;top:356.46px;line-height:16px;font-size:16px;color:#000;white-space:nowrap;transform-origin:0 0;transform:scaleX(0.9018)">1083278</div>
<div style="position:absolute;left:577.77px;top:356.46px;line-height:16px;font-size:16px;color:#000;white-space:nowrap;transform-origin:0 0;transform:scaleX(0.9124)">2022-04-06 21:52:51</div>
<div style="position:absolute;left:792.04px;top:356.46px;line-height:16px;font-size:16px;color:#000;white-space:nowrap;transform-origin:0 0;transform:scaleX(0.9575)">(null)</div>
<div style="position:absolute;left:858.22px;top:356.46px;line-height:16px;font-size:16px;color:#000;white-space:nowrap;transform-origin:0 0;transform:scaleX(0.9018)">1057</div>
<div style="position:absolute;left:894.01px;top:356.46px;line-height:16px;font-size:16px;color:#000;white-space:nowrap;transform-origin:0 0;transform:scaleX(0.9204)">ImportTest0407.ImportTest0407_csv</div>
<div style="position:absolute;left:343px;top:402px;width:905px;height:1px;background:#e3e3e3"></div>
<div style="position:absolute;left:406px;top:377px;width:1px;height:25px;background:#e3e3e3"></div>
<div style="position:absolute;left:491px;top:377px;width:1px;height:25px;background:#e3e3e3"></div>
<div style="position:absolute;left:576px;top:377px;width:1px;height:25px;background:#e3e3e3"></div>
<div style="position:absolute;left:739px;top:377px;width:1px;height:25px;background:#e3e3e3"></div>
<div style="position:absolute;left:828px;top:377px;width:1px;height:25px;background:#e3e3e3"></div>
<div style="position:absolute;left:892px;top:377px;width:1px;height:25px;background:#e3e3e3"></div>
<div style="position:absolute;left:396.02px;top:382.46px;line-height:16px;font-size:16px;color:#000;white-space:nowrap;transform-origin:0 0;transform:scaleX(0.9018)">5</div>
<div style="position:absolute;left:408.86px;top:382.46px;line-height:16px;font-size:16px;color:#000;white-space:nowrap;transform-origin:0 0;transform:scaleX(0.9018)">3144796</div>
<div style="position:absolute;left:541.66px;top:382.46px;line-height:16px;font-size:16px;color:#000;white-space:nowrap;transform-origin:0 0;transform:scaleX(0.9018)">1014</div>
<div style="position:absolute;left:577.77px;top:382.46px;line-height:16px;font-size:16px;color:#000;white-space:nowrap;transform-origin:0 0;transform:scaleX(0.9124)">2022-05-30 23:29:39</div>
<div style="position:absolute;left:792.04px;top:382.46px;line-height:16px;font-size:16px;color:#000;white-space:nowrap;transform-origin:0 0;transform:scaleX(0.9575)">(null)</div>
<div style="position:absolute;left:857.86px;top:382.46px;line-height:16px;font-size:16px;color:#000;white-space:nowrap;transform-origin:0 0;transform:scaleX(0.9018)">1014</div>
<div style="position:absolute;left:895.12px;top:382.46px;line-height:16px;font-size:16px;color:#000;white-space:nowrap;transform-origin:0 0;transform:scaleX(0.9060)">test0319</div>
<div style="position:absolute;left:343px;top:428px;width:905px;height:1px;background:#e3e3e3"></div>
<div style="position:absolute;left:406px;top:403px;width:1px;height:25px;background:#e3e3e3"></div>
<div style="position:absolute;left:491px;top:403px;width:1px;height:25px;background:#e3e3e3"></div>
<div style="position:absolute;left:576px;top:403px;width:1px;height:25px;background:#e3e3e3"></div>
<div style="position:absolute;left:739px;top:403px;width:1px;height:25px;background:#e3e3e3"></div>
<div style="position:absolute;left:828px;top:403px;width:1px;height:25px;background:#e3e3e3"></div>
<div style="position:absolute;left:892px;top:403px;width:1px;height:25px;background:#e3e3e3"></div>
<div style="position:absolute;left:396.11px;top:408.46px;line-height:16px;font-size:16px;color:#000;white-space:nowrap;transform-origin:0 0;transform:scaleX(0.9018)">6</div>
<div style="position:absolute;left:408.86px;top:408.46px;line-height:16px;font-size:16px;color:#000;white-space:nowrap;transform-origin:0 0;transform:scaleX(0.9018)">3144797</div>
<div style="position:absolute;left:541.66px;top:408.46px;line-height:16px;font-size:16px;color:#000;white-space:nowrap;transform-origin:0 0;transform:scaleX(0.9018)">1014</div>
<div style="position:absolute;left:577.77px;top:408.46px;line-height:16px;font-size:16px;color:#000;white-space:nowrap;transform-origin:0 0;transform:scaleX(0.9124)">2022-05-31 01:21:42</div>
<div style="position:absolute;left:792.04px;top:408.46px;line-height:16px;font-size:16px;color:#000;white-space:nowrap;transform-origin:0 0;transform:scaleX(0.9575)">(null)</div>
<div style="position:absolute;left:857.86px;top:408.46px;line-height:16px;font-size:16px;color:#000;white-space:nowrap;transform-origin:0 0;transform:scaleX(0.9018)">1014</div>
<div style="position:absolute;left:895.12px;top:408.46px;line-height:16px;font-size:16px;color:#000;white-space:nowrap;transform-origin:0 0;transform:scaleX(0.9060)">test0319</div>
<div style="position:absolute;left:343px;top:454px;width:905px;height:1px;background:#e3e3e3"></div>
<div style="position:absolute;left:406px;top:429px;width:1px;height:25px;background:#e3e3e3"></div>
<div style="position:absolute;left:491px;top:429px;width:1px;height:25px;background:#e3e3e3"></div>
<div style="position:absolute;left:576px;top:429px;width:1px;height:25px;background:#e3e3e3"></div>
<div style="position:absolute;left:739px;top:429px;width:1px;height:25px;background:#e3e3e3"></div>
<div style="position:absolute;left:828px;top:429px;width:1px;height:25px;background:#e3e3e3"></div>
<div style="position:absolute;left:892px;top:429px;width:1px;height:25px;background:#e3e3e3"></div>
<div style="position:absolute;left:396.20px;top:434.46px;line-height:16px;font-size:16px;color:#000;white-space:nowrap;transform-origin:0 0;transform:scaleX(0.9018)">7</div>
<div style="position:absolute;left:408.86px;top:434.46px;line-height:16px;font-size:16px;color:#000;white-space:nowrap;transform-origin:0 0;transform:scaleX(0.9018)">3144798</div>
<div style="position:absolute;left:541.66px;top:434.46px;line-height:16px;font-size:16px;color:#000;white-space:nowrap;transform-origin:0 0;transform:scaleX(0.9018)">1014</div>
<div style="position:absolute;left:577.77px;top:434.46px;line-height:16px;font-size:16px;color:#000;white-space:nowrap;transform-origin:0 0;transform:scaleX(0.9124)">2022-06-01 23:25:19</div>
<div style="position:absolute;left:792.04px;top:434.46px;line-height:16px;font-size:16px;color:#000;white-space:nowrap;transform-origin:0 0;transform:scaleX(0.9575)">(null)</div>
<div style="position:absolute;left:857.86px;top:434.46px;line-height:16px;font-size:16px;color:#000;white-space:nowrap;transform-origin:0 0;transform:scaleX(0.9018)">1014</div>
<div style="position:absolute;left:895.12px;top:434.46px;line-height:16px;font-size:16px;color:#000;white-space:nowrap;transform-origin:0 0;transform:scaleX(0.9060)">test0319</div>
<div style="position:absolute;left:343px;top:480px;width:905px;height:1px;background:#e3e3e3"></div>
<div style="position:absolute;left:406px;top:455px;width:1px;height:25px;background:#e3e3e3"></div>
<div style="position:absolute;left:491px;top:455px;width:1px;height:25px;background:#e3e3e3"></div>
<div style="position:absolute;left:576px;top:455px;width:1px;height:25px;background:#e3e3e3"></div>
<div style="position:absolute;left:739px;top:455px;width:1px;height:25px;background:#e3e3e3"></div>
<div style="position:absolute;left:828px;top:455px;width:1px;height:25px;background:#e3e3e3"></div>
<div style="position:absolute;left:892px;top:455px;width:1px;height:25px;background:#e3e3e3"></div>
<div style="position:absolute;left:396.02px;top:460.46px;line-height:16px;font-size:16px;color:#000;white-space:nowrap;transform-origin:0 0;transform:scaleX(0.9018)">8</div>
<div style="position:absolute;left:408.86px;top:460.46px;line-height:16px;font-size:16px;color:#000;white-space:nowrap;transform-origin:0 0;transform:scaleX(0.9018)">3144799</div>
<div style="position:absolute;left:541.66px;top:460.46px;line-height:16px;font-size:16px;color:#000;white-space:nowrap;transform-origin:0 0;transform:scaleX(0.9018)">1014</div>
<div style="position:absolute;left:577.77px;top:460.46px;line-height:16px;font-size:16px;color:#000;white-space:nowrap;transform-origin:0 0;transform:scaleX(0.9124)">2022-06-02 00:45:38</div>
<div style="position:absolute;left:792.04px;top:460.46px;line-height:16px;font-size:16px;color:#000;white-space:nowrap;transform-origin:0 0;transform:scaleX(0.9575)">(null)</div>
<div style="position:absolute;left:857.86px;top:460.46px;line-height:16px;font-size:16px;color:#000;white-space:nowrap;transform-origin:0 0;transform:scaleX(0.9018)">1014</div>
<div style="position:absolute;left:895.12px;top:460.46px;line-height:16px;font-size:16px;color:#000;white-space:nowrap;transform-origin:0 0;transform:scaleX(0.9060)">test0319</div>
<div style="position:absolute;left:343px;top:506px;width:905px;height:1px;background:#e3e3e3"></div>
<div style="position:absolute;left:406px;top:481px;width:1px;height:25px;background:#e3e3e3"></div>
<div style="position:absolute;left:491px;top:481px;width:1px;height:25px;background:#e3e3e3"></div>
<div style="position:absolute;left:576px;top:481px;width:1px;height:25px;background:#e3e3e3"></div>
<div style="position:absolute;left:739px;top:481px;width:1px;height:25px;background:#e3e3e3"></div>
<div style="position:absolute;left:828px;top:481px;width:1px;height:25px;background:#e3e3e3"></div>
<div style="position:absolute;left:892px;top:481px;width:1px;height:25px;background:#e3e3e3"></div>
<div style="position:absolute;left:396.11px;top:486.46px;line-height:16px;font-size:16px;color:#000;white-space:nowrap;transform-origin:0 0;transform:scaleX(0.9018)">9</div>
<div style="position:absolute;left:408.86px;top:486.46px;line-height:16px;font-size:16px;color:#000;white-space:nowrap;transform-origin:0 0;transform:scaleX(0.9018)">3144801</div>
<div style="position:absolute;left:541.66px;top:486.46px;line-height:16px;font-size:16px;color:#000;white-space:nowrap;transform-origin:0 0;transform:scaleX(0.9018)">1014</div>
<div style="position:absolute;left:577.77px;top:486.46px;line-height:16px;font-size:16px;color:#000;white-space:nowrap;transform-origin:0 0;transform:scaleX(0.9124)">2022-06-03 01:56:10</div>
<div style="position:absolute;left:792.04px;top:486.46px;line-height:16px;font-size:16px;color:#000;white-space:nowrap;transform-origin:0 0;transform:scaleX(0.9575)">(null)</div>
<div style="position:absolute;left:857.86px;top:486.46px;line-height:16px;font-size:16px;color:#000;white-space:nowrap;transform-origin:0 0;transform:scaleX(0.9018)">1014</div>
<div style="position:absolute;left:895.12px;top:486.46px;line-height:16px;font-size:16px;color:#000;white-space:nowrap;transform-origin:0 0;transform:scaleX(0.9060)">test0319</div>
<div style="position:absolute;left:343px;top:532px;width:905px;height:1px;background:#e3e3e3"></div>
<div style="position:absolute;left:406px;top:507px;width:1px;height:25px;background:#e3e3e3"></div>
<div style="position:absolute;left:491px;top:507px;width:1px;height:25px;background:#e3e3e3"></div>
<div style="position:absolute;left:576px;top:507px;width:1px;height:25px;background:#e3e3e3"></div>
<div style="position:absolute;left:739px;top:507px;width:1px;height:25px;background:#e3e3e3"></div>
<div style="position:absolute;left:828px;top:507px;width:1px;height:25px;background:#e3e3e3"></div>
<div style="position:absolute;left:892px;top:507px;width:1px;height:25px;background:#e3e3e3"></div>
<div style="position:absolute;left:387.99px;top:512.46px;line-height:16px;font-size:16px;color:#000;white-space:nowrap;transform-origin:0 0;transform:scaleX(0.9018)">10</div>
<div style="position:absolute;left:408.86px;top:512.46px;line-height:16px;font-size:16px;color:#000;white-space:nowrap;transform-origin:0 0;transform:scaleX(0.9018)">3144802</div>
<div style="position:absolute;left:541.66px;top:512.46px;line-height:16px;font-size:16px;color:#000;white-space:nowrap;transform-origin:0 0;transform:scaleX(0.9018)">1014</div>
<div style="position:absolute;left:577.77px;top:512.46px;line-height:16px;font-size:16px;color:#000;white-space:nowrap;transform-origin:0 0;transform:scaleX(0.9124)">2022-06-03 01:57:03</div>
<div style="position:absolute;left:792.04px;top:512.46px;line-height:16px;font-size:16px;color:#000;white-space:nowrap;transform-origin:0 0;transform:scaleX(0.9575)">(null)</div>
<div style="position:absolute;left:857.86px;top:512.46px;line-height:16px;font-size:16px;color:#000;white-space:nowrap;transform-origin:0 0;transform:scaleX(0.9018)">1014</div>
<div style="position:absolute;left:895.12px;top:512.46px;line-height:16px;font-size:16px;color:#000;white-space:nowrap;transform-origin:0 0;transform:scaleX(0.9060)">test0319</div>
<div style="position:absolute;left:343px;top:558px;width:905px;height:1px;background:#e3e3e3"></div>
<div style="position:absolute;left:406px;top:533px;width:1px;height:25px;background:#e3e3e3"></div>
<div style="position:absolute;left:491px;top:533px;width:1px;height:25px;background:#e3e3e3"></div>
<div style="position:absolute;left:576px;top:533px;width:1px;height:25px;background:#e3e3e3"></div>
<div style="position:absolute;left:739px;top:533px;width:1px;height:25px;background:#e3e3e3"></div>
<div style="position:absolute;left:828px;top:533px;width:1px;height:25px;background:#e3e3e3"></div>
<div style="position:absolute;left:892px;top:533px;width:1px;height:25px;background:#e3e3e3"></div>
<div style="position:absolute;left:389.15px;top:538.46px;line-height:16px;font-size:16px;color:#000;white-space:nowrap;transform-origin:0 0;transform:scaleX(0.9018)">11</div>
<div style="position:absolute;left:408.86px;top:538.46px;line-height:16px;font-size:16px;color:#000;white-space:nowrap;transform-origin:0 0;transform:scaleX(0.9018)">3144803</div>
<div style="position:absolute;left:541.66px;top:538.46px;line-height:16px;font-size:16px;color:#000;white-space:nowrap;transform-origin:0 0;transform:scaleX(0.9018)">1014</div>
<div style="position:absolute;left:577.77px;top:538.46px;line-height:16px;font-size:16px;color:#000;white-space:nowrap;transform-origin:0 0;transform:scaleX(0.9124)">2022-06-03 01:57:51</div>
<div style="position:absolute;left:792.04px;top:538.46px;line-height:16px;font-size:16px;color:#000;white-space:nowrap;transform-origin:0 0;transform:scaleX(0.9575)">(null)</div>
<div style="position:absolute;left:857.86px;top:538.46px;line-height:16px;font-size:16px;color:#000;white-space:nowrap;transform-origin:0 0;transform:scaleX(0.9018)">1014</div>
<div style="position:absolute;left:895.12px;top:538.46px;line-height:16px;font-size:16px;color:#000;white-space:nowrap;transform-origin:0 0;transform:scaleX(0.9060)">test0319</div>
<div style="position:absolute;left:343px;top:584px;width:905px;height:1px;background:#e3e3e3"></div>
<div style="position:absolute;left:406px;top:559px;width:1px;height:25px;background:#e3e3e3"></div>
<div style="position:absolute;left:491px;top:559px;width:1px;height:25px;background:#e3e3e3"></div>
<div style="position:absolute;left:576px;top:559px;width:1px;height:25px;background:#e3e3e3"></div>
<div style="position:absolute;left:739px;top:559px;width:1px;height:25px;background:#e3e3e3"></div>
<div style="position:absolute;left:828px;top:559px;width:1px;height:25px;background:#e3e3e3"></div>
<div style="position:absolute;left:892px;top:559px;width:1px;height:25px;background:#e3e3e3"></div>
<div style="position:absolute;left:388.17px;top:564.46px;line-height:16px;font-size:16px;color:#000;white-space:nowrap;transform-origin:0 0;transform:scaleX(0.9018)">12</div>
<div style="position:absolute;left:408.86px;top:564.46px;line-height:16px;font-size:16px;color:#000;white-space:nowrap;transform-origin:0 0;transform:scaleX(0.9018)">3144804</div>
<div style="position:absolute;left:541.66px;top:564.46px;line-height:16px;font-size:16px;color:#000;white-space:nowrap;transform-origin:0 0;transform:scaleX(0.9018)">1014</div>
<div style="position:absolute;left:577.77px;top:564.46px;line-height:16px;font-size:16px;color:#000;white-space:nowrap;transform-origin:0 0;transform:scaleX(0.9124)">2022-06-03 01:59:06</div>
<div style="position:absolute;left:792.04px;top:564.46px;line-height:16px;font-size:16px;color:#000;white-space:nowrap;transform-origin:0 0;transform:scaleX(0.9575)">(null)</div>
<div style="position:absolute;left:857.86px;top:564.46px;line-height:16px;font-size:16px;color:#000;white-space:nowrap;transform-origin:0 0;transform:scaleX(0.9018)">1014</div>
<div style="position:absolute;left:895.12px;top:564.46px;line-height:16px;font-size:16px;color:#000;white-space:nowrap;transform-origin:0 0;transform:scaleX(0.9060)">test0319</div>
<div style="position:absolute;left:343px;top:610px;width:905px;height:1px;background:#e3e3e3"></div>
<div style="position:absolute;left:406px;top:585px;width:1px;height:25px;background:#e3e3e3"></div>
<div style="position:absolute;left:491px;top:585px;width:1px;height:25px;background:#e3e3e3"></div>
<div style="position:absolute;left:576px;top:585px;width:1px;height:25px;background:#e3e3e3"></div>
<div style="position:absolute;left:739px;top:585px;width:1px;height:25px;background:#e3e3e3"></div>
<div style="position:absolute;left:828px;top:585px;width:1px;height:25px;background:#e3e3e3"></div>
<div style="position:absolute;left:892px;top:585px;width:1px;height:25px;background:#e3e3e3"></div>
<div style="position:absolute;left:388.08px;top:590.46px;line-height:16px;font-size:16px;color:#000;white-space:nowrap;transform-origin:0 0;transform:scaleX(0.9018)">13</div>
<div style="position:absolute;left:408.86px;top:590.46px;line-height:16px;font-size:16px;color:#000;white-space:nowrap;transform-origin:0 0;transform:scaleX(0.9018)">3144805</div>
<div style="position:absolute;left:541.66px;top:590.46px;line-height:16px;font-size:16px;color:#000;white-space:nowrap;transform-origin:0 0;transform:scaleX(0.9018)">1014</div>
<div style="position:absolute;left:577.77px;top:590.46px;line-height:16px;font-size:16px;color:#000;white-space:nowrap;transform-origin:0 0;transform:scaleX(0.9124)">2022-06-03 02:05:28</div>
<div style="position:absolute;left:792.04px;top:590.46px;line-height:16px;font-size:16px;color:#000;white-space:nowrap;transform-origin:0 0;transform:scaleX(0.9575)">(null)</div>
<div style="position:absolute;left:857.86px;top:590.46px;line-height:16px;font-size:16px;color:#000;white-space:nowrap;transform-origin:0 0;transform:scaleX(0.9018)">1014</div>
<div style="position:absolute;left:895.12px;top:590.46px;line-height:16px;font-size:16px;color:#000;white-space:nowrap;transform-origin:0 0;transform:scaleX(0.9060)">test0319</div>
<div style="position:absolute;left:342px;top:272px;width:1px;height:339px;background:#e3e3e3"></div>
<div style="position:absolute;left:343px;top:273px;width:64px;height:26px;border:1px solid #000;box-sizing:border-box"></div>
<svg style="position:absolute;left:332px;top:280px" width="7" height="11" viewBox="0 0 7 11"><path d="M0,0 L7,5.5 L0,11 Z" fill="#000"/></svg>
<div style="position:absolute;left:470px;top:274px;width:19px;height:22px;background:#e1e1e1;border:1px solid #adadad;box-sizing:border-box"></div>
<svg style="position:absolute;left:474px;top:284px" width="11" height="3" viewBox="0 0 11 3"><rect x="0" y="0" width="2" height="2" fill="#000"/><rect x="4" y="0" width="2" height="2" fill="#000"/><rect x="8" y="0" width="2" height="2" fill="#000"/></svg>
<div style="position:absolute;left:717px;top:274px;width:21px;height:23px;background:#e1e1e1;border:1px solid #adadad;box-sizing:border-box"></div>
<svg style="position:absolute;left:722px;top:283px" width="11" height="7" viewBox="0 0 11 7"><path d="M0.5,0.5 L5.5,5.5 L10.5,0.5" fill="none" stroke="#555" stroke-width="1.1"/></svg>
<div style="position:absolute;left:328px;top:611px;width:920px;height:49px;background:#f0f0f0"></div>
<div style="position:absolute;left:328px;top:610px;width:920px;height:1px;background:#e3e3e3"></div>
<div style="position:absolute;left:334.85px;top:628.46px;line-height:16px;font-size:16px;color:#000;white-space:nowrap;transform-origin:0 0;transform:scaleX(0.9276)">&lt;Filter is Empty&gt;</div>
<div style="position:absolute;left:1148px;top:617px;width:94px;height:36px;background:#e1e1e1;border:1px solid #adadad;box-sizing:border-box"></div>
<div style="position:absolute;left:1155.69px;top:628.46px;line-height:16px;font-size:16px;color:#000;white-space:nowrap;transform-origin:0 0;transform:scaleX(0.8907)">Customize...</div>
<div style="position:absolute;left:1249px;top:211px;width:20px;height:469px;background:#f0f0f0"></div>
<div style="position:absolute;left:1249px;top:232px;width:19px;height:20px;background:#cdcdcd"></div>
<svg style="position:absolute;left:1253px;top:218px" width="11" height="7" viewBox="0 0 11 7"><path d="M0.8,6 L5.5,1.3 L10.2,6" fill="none" stroke="#5a5a5a" stroke-width="2"/></svg>
<svg style="position:absolute;left:1253px;top:644px" width="11" height="7" viewBox="0 0 11 7"><path d="M0.8,1 L5.5,5.7 L10.2,1" fill="none" stroke="#5a5a5a" stroke-width="2"/></svg>
<div style="position:absolute;left:328px;top:659px;width:920px;height:1px;background:#fff"></div>
<div style="position:absolute;left:328px;top:660px;width:921px;height:20px;background:#f0f0f0"></div>
<div style="position:absolute;left:349px;top:660px;width:732px;height:20px;background:#cdcdcd"></div>
<svg style="position:absolute;left:334px;top:664px" width="7" height="11" viewBox="0 0 7 11"><path d="M6,0.8 L1.3,5.5 L6,10.2" fill="none" stroke="#5a5a5a" stroke-width="2"/></svg>
<svg style="position:absolute;left:1234px;top:664px" width="7" height="11" viewBox="0 0 7 11"><path d="M1,0.8 L5.7,5.5 L1,10.2" fill="none" stroke="#5a5a5a" stroke-width="2"/></svg>
<div style="position:absolute;left:313px;top:690px;width:966px;height:1px;background:#dadada"></div>
<div style="position:absolute;left:1273px;top:707px;width:3px;height:3px;background:#adadad"></div>
<div style="position:absolute;left:1273px;top:711px;width:3px;height:3px;background:#adadad"></div>
<div style="position:absolute;left:1269px;top:711px;width:3px;height:3px;background:#adadad"></div>
<div style="position:absolute;left:1273px;top:715px;width:3px;height:3px;background:#adadad"></div>
<div style="position:absolute;left:1269px;top:715px;width:3px;height:3px;background:#adadad"></div>
<div style="position:absolute;left:1265px;top:715px;width:3px;height:3px;background:#adadad"></div>
<div style="position:absolute;left:1.64px;top:699.46px;line-height:16px;font-size:16px;color:#000;white-space:nowrap;transform-origin:0 0;transform:scaleX(0.8921)">Ready</div>
<div style="position:absolute;left:429px;top:692px;width:1px;height:28px;background:#d7d7d7"></div>
<div style="position:absolute;left:431.60px;top:699.46px;line-height:16px;font-size:16px;color:#000;white-space:nowrap;transform-origin:0 0;transform:scaleX(0.9256)">Record 1 of at least 512</div>
<div style="position:absolute;left:859px;top:692px;width:1px;height:28px;background:#d7d7d7"></div>
</body></html>
